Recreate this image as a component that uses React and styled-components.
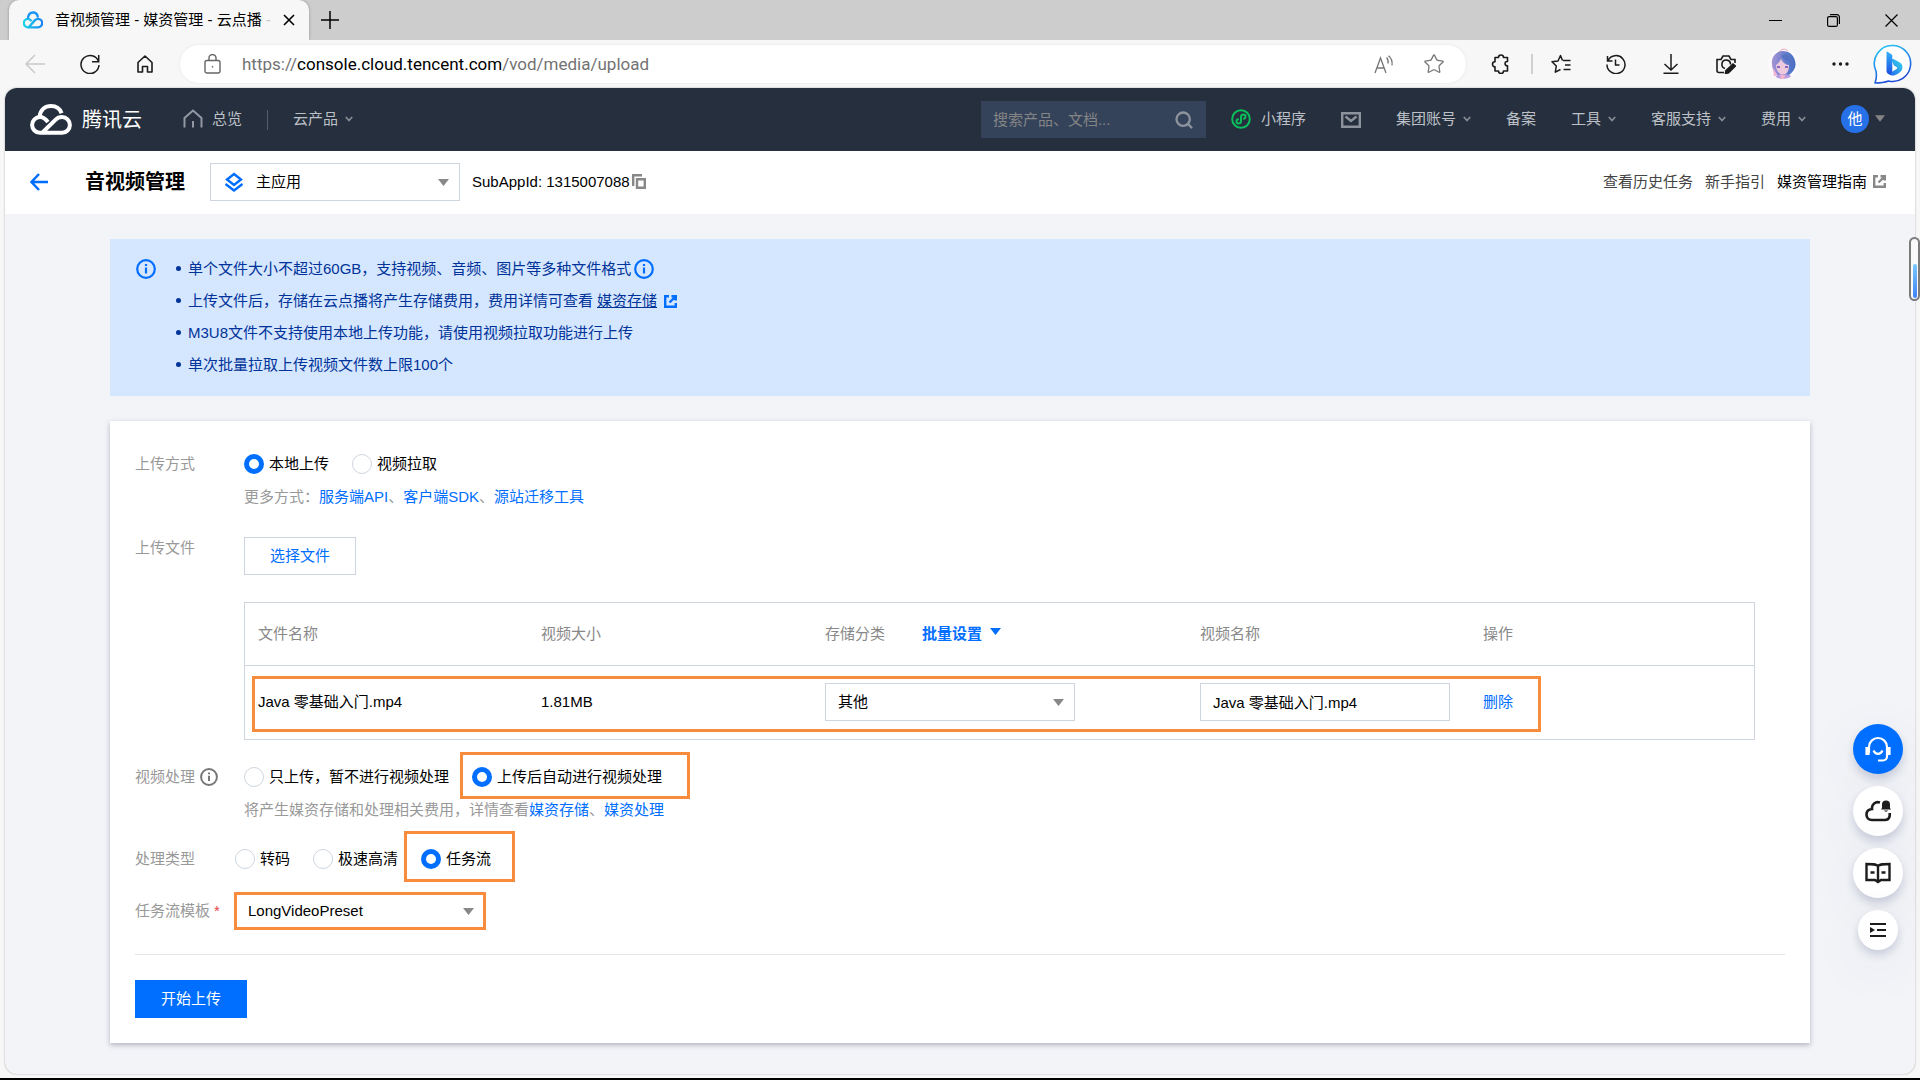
import React, { useState } from "react";
import styled, { createGlobalStyle } from "styled-components";
import { Star, Search } from "lucide-react";

const GlobalStyle = createGlobalStyle`
  * {
    box-sizing: border-box;
  }
  body {
    margin: 0;
    background: #f7f7f7;
    color: #000;
    font-family: "Liberation Sans", "Noto Sans CJK SC", sans-serif;
    font-size: 15px;
    line-height: 24px;
  }
  button, input, select {
    font: inherit;
    color: inherit;
  }
  button {
    padding: 0;
    border: 0;
    background: none;
    cursor: pointer;
  }
  svg {
    display: block;
    flex: none;
  }
`;

/* browser window */

const Window = styled.div`
  display: flex;
  flex-direction: column;
  min-height: 100vh;
  border-bottom: 2px solid #000;
`;

const TabStrip = styled.div`
  display: flex;
  align-items: stretch;
  height: 40px;
  padding-left: 9px;
  background: #cdcdcd;
`;

const Tab = styled.div`
  display: flex;
  align-items: center;
  width: 300px;
  padding: 0 14px;
  border-radius: 10px 10px 0 0;
  background: #f7f7f7;
  box-shadow: 0 0 3px rgba(0, 0, 0, 0.3);
  clip-path: inset(-3px -3px 0 -3px);
`;

const TabTitle = styled.span`
  flex: 1;
  margin: 0 4px 0 12px;
  white-space: nowrap;

  span {
    color: #c4c4c4;
  }
`;

const NewTab = styled.button`
  display: flex;
  align-items: center;
  justify-content: center;
  width: 42px;
`;

const WindowButtons = styled.div`
  display: flex;
  margin-left: auto;
`;

const WindowButton = styled.button`
  display: flex;
  align-items: center;
  justify-content: center;
  width: 58px;
`;

const Toolbar = styled.div`
  display: flex;
  align-items: center;
  height: 48px;
  padding: 0 2px 0 7px;
  color: #1b1b1b;
`;

const ToolButton = styled.button`
  display: flex;
  align-items: center;
  justify-content: center;
  width: ${(props) => props.$width || 55}px;
  height: 40px;
  color: ${(props) => props.$color || "#1b1b1b"};
`;

const AddressBar = styled.div`
  display: flex;
  align-items: center;
  flex: 1;
  height: 38px;
  margin: 0 5px 0 8px;
  padding: 0 7px 0 24px;
  border-radius: 19px;
  background: #fff;
  box-shadow: 0 0 3px rgba(0, 0, 0, 0.08);
`;

const Url = styled.span`
  flex: 1;
  margin-left: 21px;
  color: #737373;
  font-family: Roboto, sans-serif;
  font-size: 17px;

  b {
    color: #000;
    font-weight: 400;
  }
`;

const ToolDivider = styled.span`
  width: 2px;
  height: 20px;
  background: #cfcfcf;
`;

const Viewport = styled.div`
  display: flex;
  flex: 1;
  padding: 0 5px 4px;
`;

const Page = styled.div`
  display: flex;
  flex: 1;
  flex-direction: column;
  overflow: hidden;
  border-radius: 12px;
  background: #f3f4f8;
  box-shadow: 0 0 2px rgba(0, 0, 0, 0.35);
`;

const ScrollThumb = styled.div`
  position: fixed;
  top: 237px;
  right: 0;
  display: flex;
  align-items: flex-end;
  justify-content: center;
  width: 11px;
  height: 64px;
  padding-bottom: 1px;
  border: 2px solid #7b7b7b;
  border-radius: 6px;
  background: #fafafa;

  &::after {
    content: "";
    width: 4px;
    height: 34px;
    border-radius: 2px;
    background: linear-gradient(#7cc8fb, #3f84f8);
  }
`;

/* console header */

const Header = styled.header`
  display: flex;
  align-items: center;
  height: 63px;
  padding: 0 30px 0 25px;
  background: #262f3e;
  color: #bdc1c7;
`;

const Logo = styled.a`
  display: flex;
  align-items: center;
  gap: 10px;
  margin-right: 41px;
  color: #fff;
  font-size: 20px;
`;

const NavLink = styled.a`
  display: flex;
  align-items: center;
  gap: ${(props) => props.$gap || 0}px;
  padding-bottom: 2px;
  color: inherit;
  white-space: nowrap;
`;

const Chevron = styled.span`
  display: flex;
  justify-content: flex-end;
  width: 15px;
  color: #858b94;
`;

const NavDivider = styled.span`
  width: 1px;
  height: 20px;
  margin: 0 25px;
  background: #565d69;
`;

const SearchBox = styled.label`
  display: flex;
  align-items: center;
  width: 225px;
  height: 37px;
  margin: 0 25px 0 auto;
  padding: 0 12px;
  background: #34435a;
  color: #8d939c;

  input {
    flex: 1;
    min-width: 0;
    padding: 0;
    border: 0;
    outline: 0;
    background: none;
  }
  input::placeholder {
    color: #858585;
    opacity: 1;
  }
`;

const HeaderNav = styled.nav`
  display: flex;
  align-items: center;
  gap: 35px;
`;

const Account = styled.button`
  display: flex;
  align-items: center;
  gap: 6px;
  padding-bottom: 2px;
  color: #858585;
`;

const AccountBadge = styled.span`
  width: 28px;
  border-radius: 50%;
  background: #2670e8;
  color: #fff;
  font-size: 15px;
  line-height: 28px;
  text-align: center;
`;

/* title bar */

const TitleBar = styled.div`
  display: flex;
  align-items: center;
  height: 63px;
  padding: 0 29px 2px 24px;
  background: #fff;
`;

const Title = styled.h1`
  margin: 0 25px 0 36px;
  font-size: 20px;
  font-weight: 700;
`;

const SubApp = styled.span`
  display: flex;
  align-items: center;
  gap: 2px;
  margin-left: 12px;
`;

const TitleLinks = styled.div`
  display: flex;
  align-items: center;
  gap: 12px;
  margin-left: auto;
  color: #444;
`;

const TitleLink = styled.a`
  display: flex;
  align-items: center;
  gap: 6px;
  color: ${(props) => (props.$strong ? "#000" : "inherit")};
`;

/* form controls */

const SelectBox = styled.span`
  position: relative;
  display: block;
  width: 250px;

  select {
    display: block;
    width: 100%;
    height: 38px;
    padding: 0 30px 0 ${(props) => (props.$icon ? 45 : 12)}px;
    border: 1px solid #cfd5de;
    border-radius: 0;
    outline: 0;
    background: #fff;
    appearance: none;
  }
`;

const SelectCaret = styled.span`
  position: absolute;
  top: 16px;
  right: 11px;
  pointer-events: none;
  color: #888;
`;

const SelectIcon = styled.span`
  position: absolute;
  top: 9px;
  left: 14px;
  pointer-events: none;
`;

const TextInput = styled.input`
  display: block;
  width: 250px;
  height: 38px;
  padding: 0 12px 2px;
  border: 1px solid #cfd5de;
  outline: 0;
`;

const RadioLabel = styled.label`
  display: flex;
  align-items: center;
  gap: 5px;
  height: 30px;
  white-space: nowrap;

  input {
    width: 20px;
    height: 20px;
    margin: 0;
    border: 1px solid #cfd5de;
    border-radius: 50%;
    background: #fff;
    appearance: none;
  }
  input:checked {
    border: 5px solid #006eff;
  }
`;

const Button = styled.button`
  display: block;
  width: 112px;
  height: 38px;
  border: 1px solid ${(props) => (props.$primary ? "#006eff" : "#cfd5de")};
  background: ${(props) => (props.$primary ? "#006eff" : "#fff")};
  color: ${(props) => (props.$primary ? "#fff" : "#006eff")};
`;

const BlueLink = styled.a`
  color: #006eff;
`;

/* orange frame drawn over a control */
const Marked = styled.div`
  position: relative;

  &::after {
    content: "";
    position: absolute;
    inset: ${(props) => props.$inset || "0"};
    width: ${(props) => props.$width || "auto"};
    border: 3px solid #f98b3c;
    pointer-events: none;
  }
`;

/* content */

const Content = styled.main`
  flex: 1;
  padding: 25px 105px 30px;
`;

const Notice = styled.section`
  display: flex;
  gap: 22px;
  height: 157px;
  padding: 18px 26px;
  background: #d5e6ff;
  color: #003399;
`;

const NoticeIcon = styled.span`
  padding-top: 2px;
  color: #006eff;
`;

const NoticeList = styled.ul`
  display: flex;
  flex-direction: column;
  gap: 8px;
  margin: 0;
  padding: 0;
  list-style: none;

  li {
    display: flex;
    align-items: center;
  }
  li::before {
    content: "";
    width: 5px;
    height: 5px;
    margin: 0 7px 2px -2px;
    border-radius: 50%;
    background: currentColor;
  }
  li a {
    margin: 0 4px;
    color: inherit;
    text-decoration: underline;
  }
  svg {
    margin-left: 3px;
    color: #006eff;
  }
`;

const Card = styled.form`
  margin-top: 25px;
  padding: 28px 25px 25px;
  background: #fff;
  box-shadow: 0 2px 5px rgba(54, 58, 80, 0.35);
`;

const Field = styled.div`
  display: flex;
  margin-top: ${(props) => props.$top || 0}px;
`;

const FieldLabel = styled.div`
  display: flex;
  flex: none;
  align-items: center;
  gap: 5px;
  width: ${(props) => (props.$narrow ? 100 : 109)}px;
  height: ${(props) => (props.$tall ? 38 : 30)}px;
  color: #999;

  i {
    margin-left: -1px;
    color: #e54545;
    font-style: normal;
  }
  svg {
    color: #777;
  }
`;

const FieldBody = styled.div`
  flex: 1;
  min-width: 0;
`;

const Radios = styled.div`
  display: flex;
  gap: 23px;
`;

const Hint = styled.p`
  margin: 6px 0 0;
  color: #999;
`;

const FileArea = styled(FieldBody)`
  padding: 4px 30px 0 0;
`;

const TableFrame = styled.div`
  margin-top: 27px;
  border: 1px solid #cfd5de;
`;

const FileTable = styled.table`
  width: 100%;
  table-layout: fixed;
  border-collapse: collapse;

  th,
  td {
    padding: 0 0 0 13px;
    text-align: left;
    font-weight: 400;
  }
  th {
    height: 62px;
    border-bottom: 1px solid #cfd5de;
    color: #888;
  }
  td {
    height: 74px;
  }
`;

const BatchButton = styled.button`
  display: inline-flex;
  align-items: center;
  gap: 8px;
  margin-left: 37px;
  color: #006eff;
  font-weight: 700;

  svg {
    margin-bottom: 4px;
  }
`;

const Footer = styled.div`
  margin-top: 24px;
  padding-top: 25px;
  border-top: 1px solid #e5e5e5;
`;

/* floating help buttons */

const FloatBar = styled.aside`
  position: fixed;
  right: 17px;
  bottom: 130px;
  display: flex;
  flex-direction: column;
  align-items: center;
  gap: 12px;
`;

const FloatButton = styled.button`
  display: flex;
  align-items: center;
  justify-content: center;
  width: ${(props) => (props.$small ? 40 : 50)}px;
  height: ${(props) => (props.$small ? 40 : 50)}px;
  border-radius: 50%;
  background: ${(props) => (props.$primary ? "#006eff" : "#fff")};
  color: ${(props) => (props.$primary ? "#fff" : "#1c1c1c")};
  box-shadow: 0 5px 10px rgba(55, 75, 120, 0.22),
    0 15px 60px rgba(55, 75, 120, 0.08);
`;

/* icons */

const Line = ({ w = 20, h = w, box, sw = 1.5, children, ...rest }) => (
  <svg
    width={w}
    height={h}
    viewBox={box || `0 0 ${w} ${h}`}
    fill="none"
    stroke="currentColor"
    strokeWidth={sw}
    {...rest}
  >
    {children}
  </svg>
);

const CloudMark = () => (
  <Line w={42} h={31} sw={4}>
    <path d="M18 18C15.5 14.8 13 13 10 13a7.9 7.9 0 0 0 0 15.8h22A7.9 7.9 0 0 0 32 13c-2.8 0-4.8 1-6.6 2.8L13 28" />
    <path d="M9.5 12.5C10.5 6 15 2 21 2c5 0 9 2.8 10.6 7.2" />
  </Line>
);

const Favicon = () => (
  <svg width="20" height="20" viewBox="-1 -5 44 41" fill="none" strokeWidth="5">
    <defs>
      <linearGradient id="fav" x1="0" x2="1">
        <stop offset="0" stopColor="#18d5e8" />
        <stop offset="1" stopColor="#1c83f2" />
      </linearGradient>
    </defs>
    <path
      stroke="url(#fav)"
      d="M18 18C15.5 14.8 13 13 10 13a7.9 7.9 0 0 0 0 18.5h22A7.9 7.9 0 0 0 32 13c-2.8 0-4.8 1-6.6 2.8L12 31"
    />
    <path stroke="#1c94f2" d="M9.5 12.5C10.5 4 15-1 21-1c6 0 10 4 11 11" />
  </svg>
);

const Caret = ({ w = 11, h = 7 }) => (
  <svg width={w} height={h} viewBox="0 0 11 7" fill="currentColor">
    <path d="M0 0h11L5.5 7z" />
  </svg>
);

const Down = () => (
  <Chevron>
    <Line w={8} h={6} sw={1.8}>
      <path d="M.8 1 4 4.5 7.2 1" />
    </Line>
  </Chevron>
);

const Info = ({ size = 20 }) => (
  <Line w={size} box="0 0 20 20" sw={2.2}>
    <circle cx="10" cy="10" r="8.8" />
    <path d="M10 8.5v6M10 5v2" />
  </Line>
);

const External = ({ color }) => (
  <Line w={13} sw={2.4} color={color}>
    <path d="M5 1.2H1.2v10.6h10.6V8M7.5 1.2h4.3v4.3M11.5 1.5l-6 6" />
  </Line>
);

const Home = () => (
  <Line w={20} h={20} sw={1.6}>
    <path
      strokeLinejoin="round"
      d="M3 8.5 10 2l7 6.5V18h-4.5v-5.5h-5V18H3z"
    />
  </Line>
);

const Avatar = () => (
  <svg width="30" height="32" viewBox="0 0 30 32">
    <defs>
      <clipPath id="face">
        <circle cx="15" cy="16" r="15" />
      </clipPath>
      <linearGradient id="hair" x1="0" x2="1">
        <stop offset="0" stopColor="#a594d6" />
        <stop offset="1" stopColor="#3d6fc4" />
      </linearGradient>
    </defs>
    <g clipPath="url(#face)">
      <rect width="30" height="32" fill="#fcfafd" />
      <path
        fill="url(#hair)"
        d="M15 3C8 3 3 9 4 16c0 6 3 9 5 11h12c4-3 8-8 6-14C26 7 21 3 15 3z"
      />
      <path fill="#edc9de" d="M8 17c2-1 4-4 5-6 2 4 5 6 8 6 0 6-2 9-6 10-4-1-7-4-7-10z" />
      <path fill="#8a6ac0" d="M9 18h3v2H9zM17 18h3v2h-3z" />
      <path fill="#5672c4" d="M13 8c3 4 7 6 10 7l1 8c2-3 3-8 0-13-3-4-8-5-11-2z" />
      <path fill="#b89be0" d="M9 27c3-1 9-1 13 0l2 5H6z" />
      <path fill="#f0b4cf" d="M5 20l4 6-3 4zM12 27h5l-1 5h-3z" />
    </g>
    <path fill="none" stroke="#e8a3b8" d="M11 4c2-3 6-4 9-1" />
  </svg>
);

const Bing = () => (
  <svg width="40" height="40" viewBox="0 0 40 40">
    <defs>
      <linearGradient id="ring" x1="0" y1="0" x2=".4" y2="1">
        <stop offset="0" stopColor="#22cdf3" />
        <stop offset=".6" stopColor="#2484e8" />
        <stop offset="1" stopColor="#1b48d8" />
      </linearGradient>
      <linearGradient id="stem" x1="0" y1="0" x2="0" y2="1">
        <stop offset="0" stopColor="#36b2fa" />
        <stop offset="1" stopColor="#1b50e0" />
      </linearGradient>
      <linearGradient id="bowl" x1="1" y1="0" x2="0" y2="1">
        <stop offset="0" stopColor="#35dfe8" />
        <stop offset="1" stopColor="#2461f0" />
      </linearGradient>
    </defs>
    <path
      fill="#fff"
      stroke="url(#ring)"
      strokeWidth="1.6"
      strokeLinejoin="round"
      d="M20.5 1.5a18 18 0 1 1-5 35.5c-4 1.5-8 2-13.5 2 1.5-4 2-7 1-12A18 18 0 0 1 20.5 1.5z"
    />
    <path
      fill="url(#bowl)"
      d="M20.5 15c-1.5-.5-2 .8-1.5 2l2 4.5 2.5 1.5c1 .6 1 1.5 0 2L15.500 30c3.5 2.5 6.5 1.5 9 0l2.500-1.800c3.500-3 3.500-8-1-10.200z"
    />
    <path
      fill="url(#stem)"
      d="M14 7.5 18 10c1 .5 1.3 1.3 1.3 2.3V27.500c-1 3-4 3.800-5.400 1-.3-.7-.4-1.300-.4-1.800V8c0-.5.2-.7.5-.5z"
    />
  </svg>
);

const NAV = [
  { text: "集团账号", menu: true },
  { text: "备案" },
  { text: "工具", menu: true },
  { text: "客服支持", menu: true },
  { text: "费用", menu: true },
];

const Radio = ({ name, value, current, onChange, children }) => (
  <RadioLabel>
    <input
      type="radio"
      name={name}
      checked={current === value}
      onChange={() => onChange(value)}
    />
    {children}
  </RadioLabel>
);

const Select = ({ label, icon, children }) => (
  <SelectBox $icon={Boolean(icon)}>
    <select aria-label={label}>{children}</select>
    {icon && <SelectIcon>{icon}</SelectIcon>}
    <SelectCaret>
      <Caret />
    </SelectCaret>
  </SelectBox>
);

const BrowserBar = () => (
  <>
    <TabStrip>
      <Tab>
        <Favicon />
        <TabTitle>
          音视频管理 - 媒资管理 - 云点播 <span>-</span>
        </TabTitle>
        <button aria-label="关闭标签页">
          <Line w={12} sw={1.6}>
            <path d="m1 1 10 10M11 1 1 11" />
          </Line>
        </button>
      </Tab>
      <NewTab aria-label="新建标签页">
        <Line w={18} sw={1.5}>
          <path d="M9 0v18M0 9h18" />
        </Line>
      </NewTab>
      <WindowButtons>
        <WindowButton aria-label="最小化">
          <Line w={13} sw={1}>
            <path d="M0 6.5h13" />
          </Line>
        </WindowButton>
        <WindowButton aria-label="还原">
          <Line w={13} sw={1.2}>
            <rect x=".6" y="2.6" width="9.8" height="9.8" rx="1.5" />
            <path d="M3 .6h7a2.4 2.4 0 0 1 2.4 2.4v7" />
          </Line>
        </WindowButton>
        <WindowButton aria-label="关闭">
          <Line w={13} sw={1.2}>
            <path d="m.5.5 12 12m0-12-12 12" />
          </Line>
        </WindowButton>
      </WindowButtons>
    </TabStrip>
    <Toolbar>
      <ToolButton aria-label="后退" $color="#c9c9c9">
        <Line>
          <path d="M20 10H1m9-9-9 9 9 9" />
        </Line>
      </ToolButton>
      <ToolButton aria-label="刷新">
        <Line>
          <path d="M18.5 7.5A9 9 0 1 0 19 11M18.7 1v6.7H12" />
        </Line>
      </ToolButton>
      <ToolButton aria-label="主页">
        <Home />
      </ToolButton>
      <AddressBar>
        <Line w={17} h={20} color="#666" sw={1.4}>
          <rect x="1" y="6.5" width="15" height="12.5" rx="2" />
          <path d="M5 6.5V4a3.5 3.5 0 0 1 7 0v2.5M8.5 12v1.6" />
        </Line>
        <Url>
          https://<b>console.cloud.tencent.com</b>/vod/media/upload
        </Url>
        <ToolButton aria-label="大声朗读" $width={50} $color="#777">
          <Line h={19} sw={1.3}>
            <path d="M1 18 6.5 3 12 18M3 13h7M12.5 2.5c1.5 1.5 2 3.5 1.5 6M14.5.8c3.5 3 4 6 3.5 9.5" />
          </Line>
        </ToolButton>
        <ToolButton aria-label="收藏" $width={50} $color="#777">
          <Star size={22} strokeWidth={1.4} />
        </ToolButton>
      </AddressBar>
      <ToolButton aria-label="扩展" $width={60}>
        <Line sw={1.6}>
          <path
            strokeLinejoin="round"
            d="M4 3.5h3.5a2.5 2.5 0 0 1 5 0h4v4c-3-.6-3.5 4.5 0 4.2V17h-4a2.5 2.5 0 0 1-5 0H4v-4.2a2.5 2.5 0 0 1 0-5z"
          />
        </Line>
      </ToolButton>
      <ToolDivider />
      <ToolButton aria-label="收藏夹">
        <Line h={20} sw={1.5}>
          <path
            strokeLinejoin="round"
            d="M12 6.5h7.5M14 11h5.5M12.5 15.5h7M11.5 6.5l-2-5L7 7l-6 .8L5.300 12l-1 6.200 5.200-2.700"
          />
        </Line>
      </ToolButton>
      <ToolButton aria-label="历史记录">
        <Line sw={1.5}>
          <path d="M1.5 2v5h5M2 6.5A9 9 0 1 1 1 10.5M9.5 5.5V11h4" />
        </Line>
      </ToolButton>
      <ToolButton aria-label="下载">
        <Line w={16} h={20}>
          <path d="M8 0v16M1.5 10 8 16l6.5-6M.5 19.2h15" />
        </Line>
      </ToolButton>
      <ToolButton aria-label="网页捕获">
        <Line sw={1.6}>
          <path d="M8 18.5H3a2 2 0 0 1-2-2v-11h4L7 2h6l2 3.5h4V9" />
          <path d="M9 14.5a4.3 4.3 0 1 1 5.5-4" />
          <path fill="currentColor" d="m10 16.5 7-6.5 2.3 2-6.8 6.7-3 .8z" />
        </Line>
      </ToolButton>
      <ToolButton aria-label="个人资料" $width={60}>
        <Avatar />
      </ToolButton>
      <ToolButton aria-label="设置及其他">
        <svg width="17" height="4" viewBox="0 0 17 4" fill="currentColor">
          <circle cx="2" cy="2" r="1.7" />
          <circle cx="8.5" cy="2" r="1.7" />
          <circle cx="15" cy="2" r="1.7" />
        </svg>
      </ToolButton>
      <ToolButton aria-label="必应" $width={50}>
        <Bing />
      </ToolButton>
    </Toolbar>
  </>
);

const ConsoleHeader = () => (
  <Header>
    <Logo>
      <CloudMark />
      腾讯云
    </Logo>
    <NavLink $gap={9}>
      <Line w={20} h={19} sw={2} color="#9299a3">
        <path d="M1.5 18.5V9L10 1.5 18.5 9v9.5M10 12v6.5" />
      </Line>
      总览
    </NavLink>
    <NavDivider />
    <NavLink>
      云产品
      <Down />
    </NavLink>
    <SearchBox>
      <input placeholder="搜索产品、文档..." aria-label="搜索" />
      <Search size={20} strokeWidth={2.8} />
    </SearchBox>
    <HeaderNav>
      <NavLink $gap={10}>
        <Line w={20} sw={2} color="#0abf5b">
          <circle cx="10" cy="10" r="8.8" />
          <path d="M7.8 10C4.5 10.5 5 14.5 7.500 14.5c1.5 0 2.5-1 2.5-2.5V8c0-1.500 1-2.500 2.500-2.500 2.500 0 3 4-.3 4.500" />
        </Line>
        <span>小程序</span>
      </NavLink>
      <Line w={20} h={16} sw={2.4} color="#8d939c">
        <path d="M1.2 1.2h17.6v13.6H1.2zM4.5 4.5 10 9l5.5-4.500" />
      </Line>
      {NAV.map((item) => (
        <NavLink key={item.text}>
          {item.text}
          {item.menu && <Down />}
        </NavLink>
      ))}
      <Account>
        <AccountBadge>他</AccountBadge>
        <Caret w={10} h={7} />
      </Account>
    </HeaderNav>
  </Header>
);

const App = () => {
  const [method, setMethod] = useState("local");
  const [process, setProcess] = useState("auto");
  const [kind, setKind] = useState("flow");
  const [videoName, setVideoName] = useState("Java 零基础入门.mp4");

  return (
    <Window>
      <GlobalStyle />
      <BrowserBar />
      <Viewport>
        <Page>
          <ConsoleHeader />
          <TitleBar>
            <button aria-label="返回">
              <Line w={20} h={18} sw={2.5} color="#006eff">
                <path d="M19 9H3M10 1 2.5 9l7.5 8" />
              </Line>
            </button>
            <Title>音视频管理</Title>
            <Select
              label="应用"
              icon={
                <Line w={20} h={20} sw={2.4} color="#006eff">
                  <path d="m10 2 7 5.5-7 5.5-7-5.5zM1.5 12l8.5 6.5 8.5-6.5" />
                </Line>
              }
            >
              <option>主应用</option>
            </Select>
            <SubApp>
              SubAppId: 1315007088
              <Line w={14} h={15} sw={2.4} color="#888">
                <path d="M1.2 12V1.2H10M5 5.2h7.8v8.6H5z" />
              </Line>
            </SubApp>
            <TitleLinks>
              <TitleLink>查看历史任务</TitleLink>
              <TitleLink>新手指引</TitleLink>
              <TitleLink $strong>
                媒资管理指南
                <External color="#888" />
              </TitleLink>
            </TitleLinks>
          </TitleBar>

          <Content>
            <Notice>
              <NoticeIcon>
                <Info />
              </NoticeIcon>
              <NoticeList>
                <li>
                  单个文件大小不超过60GB，支持视频、音频、图片等多种文件格式
                  <Info />
                </li>
                <li>
                  上传文件后，存储在云点播将产生存储费用，费用详情可查看
                  <a>媒资存储</a>
                  <External />
                </li>
                <li>M3U8文件不支持使用本地上传功能，请使用视频拉取功能进行上传</li>
                <li>单次批量拉取上传视频文件数上限100个</li>
              </NoticeList>
            </Notice>

            <Card onSubmit={(e) => e.preventDefault()}>
              <Field>
                <FieldLabel>上传方式</FieldLabel>
                <FieldBody>
                  <Radios>
                    <Radio name="method" value="local" current={method} onChange={setMethod}>
                      本地上传
                    </Radio>
                    <Radio name="method" value="pull" current={method} onChange={setMethod}>
                      视频拉取
                    </Radio>
                  </Radios>
                  <Hint>
                    更多方式：<BlueLink>服务端API</BlueLink>、
                    <BlueLink>客户端SDK</BlueLink>、
                    <BlueLink>源站迁移工具</BlueLink>
                  </Hint>
                </FieldBody>
              </Field>

              <Field $top={24}>
                <FieldLabel>上传文件</FieldLabel>
                <FileArea>
                  <Button type="button">选择文件</Button>
                  <TableFrame>
                    <Marked $inset="73px auto 7px 7px" $width="1283px">
                      <FileTable>
                        <colgroup>
                          <col width="283" />
                          <col width="284" />
                          <col width="375" />
                          <col width="283" />
                          <col />
                        </colgroup>
                        <thead>
                          <tr>
                            <th>文件名称</th>
                            <th>视频大小</th>
                            <th>
                              存储分类
                              <BatchButton type="button">
                                批量设置
                                <Caret />
                              </BatchButton>
                            </th>
                            <th>视频名称</th>
                            <th>操作</th>
                          </tr>
                        </thead>
                        <tbody>
                          <tr>
                            <td>Java 零基础入门.mp4</td>
                            <td>1.81MB</td>
                            <td>
                              <Select label="存储分类">
                                <option>其他</option>
                              </Select>
                            </td>
                            <td>
                              <TextInput
                                aria-label="视频名称"
                                value={videoName}
                                onChange={(e) => setVideoName(e.target.value)}
                              />
                            </td>
                            <td>
                              <BlueLink>删除</BlueLink>
                            </td>
                          </tr>
                        </tbody>
                      </FileTable>
                    </Marked>
                  </TableFrame>
                </FileArea>
              </Field>

              <Field $top={22}>
                <FieldLabel>
                  视频处理
                  <Info size={18} />
                </FieldLabel>
                <FieldBody>
                  <Radios>
                    <Radio name="process" value="none" current={process} onChange={setProcess}>
                      只上传，暂不进行视频处理
                    </Radio>
                    <Marked $inset="-10px -28px -7px -12px">
                      <Radio name="process" value="auto" current={process} onChange={setProcess}>
                        上传后自动进行视频处理
                      </Radio>
                    </Marked>
                  </Radios>
                  <Hint>
                    将产生媒资存储和处理相关费用，详情查看<BlueLink>媒资存储</BlueLink>、
                    <BlueLink>媒资处理</BlueLink>
                  </Hint>
                </FieldBody>
              </Field>

              <Field $top={22}>
                <FieldLabel $narrow>处理类型</FieldLabel>
                <Radios>
                  <Radio name="kind" value="transcode" current={kind} onChange={setKind}>
                    转码
                  </Radio>
                  <Radio name="kind" value="hd" current={kind} onChange={setKind}>
                    极速高清
                  </Radio>
                  <Marked $inset="-13px -24px -8px -17px">
                    <Radio name="kind" value="flow" current={kind} onChange={setKind}>
                      任务流
                    </Radio>
                  </Marked>
                </Radios>
              </Field>

              <Field $top={18}>
                <FieldLabel $narrow $tall>
                  任务流模板<i>*</i>
                </FieldLabel>
                <Marked $inset="0 -1px">
                  <Select label="任务流模板">
                    <option>LongVideoPreset</option>
                  </Select>
                </Marked>
              </Field>

              <Footer>
                <Button $primary>开始上传</Button>
              </Footer>
            </Card>
          </Content>
        </Page>
      </Viewport>

      <ScrollThumb />
      <FloatBar>
        <FloatButton $primary aria-label="客服">
          <Line w={26} sw={2.2}>
            <path d="M4 17v-6a9 9 0 0 1 18 0v9.5a4 4 0 0 1-4 4h-5M8.5 14.5c2 4.5 7 4.5 9 0" />
            <path fill="currentColor" d="M1.5 12h2v6h-2zM22.5 12h2v6h-2z" />
          </Line>
        </FloatButton>
        <FloatButton aria-label="云助手">
          <Line w={26} h={22} sw={2.6}>
            <path d="M15 2.5C10.5 1 6.5 4.5 7 9c-4 .5-5.500 3-5.500 5.500C1.500 17.500 3.500 20 7 20h13c4 0 5-3 4.700-7" />
            <path
              stroke="none"
              fill="currentColor"
              d="M17 8V4.500a4 4 0 0 1 8 0V8l1 1.500H16zM19 10.500h4c-.5 1.500-3.500 1.500-4 0z"
            />
          </Line>
        </FloatButton>
        <FloatButton aria-label="文档">
          <Line w={26} h={22} sw={2.4}>
            <path d="M13 4c-2-2-5-2-11.500-2v16H10l3 2 3-2h8.500V2C18 2 15 2 13 4zM13 4v16M5.500 10.500h4M16.500 10.500h4" />
          </Line>
        </FloatButton>
        <FloatButton $small aria-label="收起">
          <Line w={16} h={14} sw={2}>
            <path d="M0 1h16M7 7h9M0 13h16" />
            <path stroke="none" fill="currentColor" d="M0 4l5 3-5 3z" />
          </Line>
        </FloatButton>
      </FloatBar>
    </Window>
  );
};

export default App;
